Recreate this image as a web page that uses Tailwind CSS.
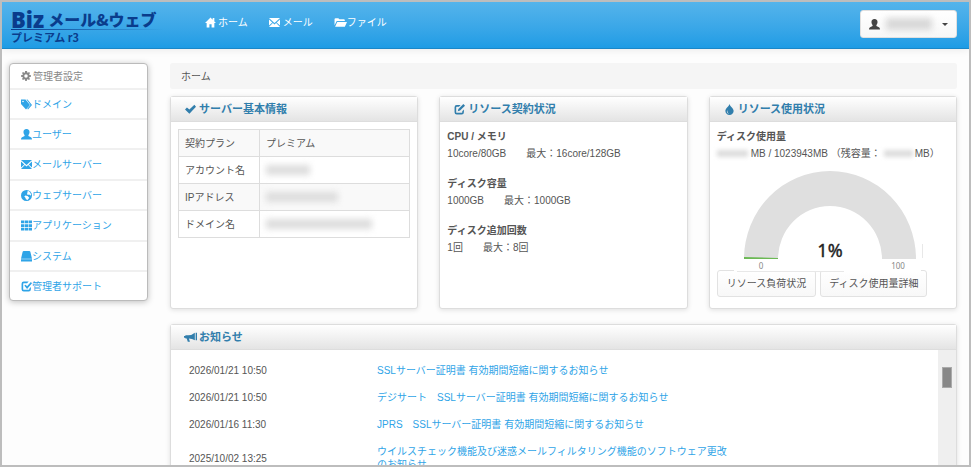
<!DOCTYPE html>
<html lang="ja">
<head>
    <meta charset="UTF-8">
    <meta name="viewport" content="width=device-width, initial-scale=1.0">
    <title>Bizメール&amp;ウェブ プレミアム r3</title>
    <script src="https://cdn.jsdelivr.net/npm/@tailwindcss/browser@4"></script>
</head>
<body class="h-screen overflow-hidden border-2 border-[#bdbdbd] bg-[#fdfdfd] font-['Liberation_Sans','Noto_Sans_CJK_JP',sans-serif] text-[10px] leading-[17px] text-[#555]">

    <!-- icons -->
    <svg class="hidden">
        <symbol id="home" viewBox="0 0 20 20"><path d="M10 1 0 11h3v8h5v-6h4v6h5v-8h3l-3-3V2h-3v3z"/></symbol>
        <symbol id="mail" viewBox="0 0 20 20"><path d="M0 2h20L10 11zM0 4.500 6 10 0 15.500zM20 4.500v11L14 10zM7 11l3 2.500 3-2.500 7 7H0z"/></symbol>
        <symbol id="folder" viewBox="0 0 24 20"><path d="M1 4q0-2 2-2h5l2 2h8q2 0 2 2v1H5L1 15zM6 9h18l-4 9H2z"/></symbol>
        <symbol id="user" viewBox="0 0 20 20"><path d="M10 0c4 0 5.500 2.500 5.500 5.500 0 2.500-1 4-2 5.500v1.500l4.500 2.500q2 1 2 4H0q0-3 2-4l4.500-2.500V11C5.500 9.500 4.500 8 4.500 5.500 4.500 2.500 6 0 10 0z"/></symbol>
        <symbol id="cog" viewBox="0 0 20 20"><path fill-rule="evenodd" d="M8 0h4l.5 3 1.500.6L16 2l2 2-1.700 2.500.7 1.500 3 .5v3l-3 .5-.7 1.500L18 16l-2 2-2.500-1.600-1.500.6-.5 3h-3L8 17l-1.500-.6L4 18l-2-2 1.700-2.500L3 12l-3-.5v-3L3 8l.7-1.500L2 4l2-2 2.500 1.600L8 3zM10 6.500a3.500 3.500 0 100 7 3.500 3.500 0 000-7z"/></symbol>
        <symbol id="tags" viewBox="0 0 22 20"><path fill-rule="evenodd" d="M0 0h9l9 11-8 9L0 9zM4 2.500a1.600 1.600 0 100 3.200 1.600 1.600 0 000-3.200z"/><path d="M11 0h2l9 11-8 9-1.500-1.500L19 11z"/></symbol>
        <symbol id="globe" viewBox="0 0 20 20"><path fill-rule="evenodd" d="M10 0a10 10 0 100 20 10 10 0 000-20zM11 3l3-1 3 3 1.500 4-1.500 1-2-2-3 1-1-3 1-1zM8 10l4 1 3 3-3 4-3-1-1-3-2-2z"/></symbol>
        <symbol id="grid" viewBox="0 0 20 20"><path d="M0 1h6v5H0zM7 1h6v5H7zM14 1h6v5h-6zM0 7.500h6v5H0zM7 7.500h6v5H7zM14 7.500h6v5h-6zM0 14h6v5H0zM7 14h6v5H7zM14 14h6v5h-6z"/></symbol>
        <symbol id="disk" viewBox="0 0 20 20"><path d="M5 0h10q1.500 0 2 1.500L20 14H0L3 1.500Q3.500 0 5 0zM0 15h20v4H0z"/></symbol>
        <symbol id="check" viewBox="0 0 20 20"><path d="M14 1H5Q1 1 1 5v10q0 4 4 4h9q4 0 4-4v-4l-3 3v1q0 1-1 1H5q-1 0-1-1V5q0-1 1-1h6z"/><path d="M6 8 8.500 7 11 9.500 18 2l2 2-9 10.500z"/></symbol>
        <symbol id="edit" viewBox="0 0 20 20"><path d="M12 2H5Q1 2 1 6v9q0 4 4 4h9q4 0 4-4v-5l-3 3v2q0 1-1 1H5q-1 0-1-1V6q0-1 1-1h4z"/><path d="m17 0 3 3-9 9-4 1 1-4z"/></symbol>
        <symbol id="ok" viewBox="0 0 20 20"><path d="m0 10 3.500-3.500L8 10l9-8.500L20 5 8 17.500z"/></symbol>
        <symbol id="drop" viewBox="0 0 20 20"><path fill-rule="evenodd" d="M10 0c1.500 5 7.500 8 7.500 12.500a7.500 7.500 0 01-15 0C2.500 8 8.500 5 10 0zM6 11c-2 4 0 6 3 7-2-2-3-4-3-7z"/></symbol>
        <symbol id="horn" viewBox="0 0 24 20"><path d="M20 1v14q-5-3-11-3l2 6H7l-2-6H3l-1-1.500H0V7h2l1-1h5q6 0 12-5zM21.500 1H24v14h-2.500z"/></symbol>
    </svg>

    <header class="flex h-[47px] items-start border-b border-[#1b87c8] bg-linear-to-b from-[#54b4eb] to-[#1d9ce5] pr-3 pl-[9px] text-white shadow-[0_1px_8px_rgba(0,0,0,0.08)]">
        <a href="#" class="mt-[8px] w-[153px] font-bold whitespace-nowrap text-[#0a3c8c]">
            <span class="flex h-[19px] items-center gap-[4px] leading-[19px]">
                <span class="font-['Open_Sans'] text-[22px] font-extrabold">Biz</span>
                <span class="font-['Noto_Sans_CJK_JP'] text-[16px] font-black">メール&amp;ウェブ</span>
            </span>
            <span class="block h-px bg-linear-to-r from-[#0a3c8c] to-transparent"></span>
            <span class="block font-['Noto_Sans_CJK_JP'] text-[11px] leading-[14px]">プレミアム r3</span>
        </a>
        <nav class="ml-[41px] flex h-[40px] flex-1 items-center gap-[21px]">
            <a href="#" class="flex items-center gap-[2px]"><svg class="size-[11px] fill-current"><use href="#home"/></svg>ホーム</a>
            <a href="#" class="flex items-center gap-[3px]"><svg class="size-[11px] fill-current"><use href="#mail"/></svg>メール</a>
            <a href="#" class="flex items-center"><svg class="h-[11px] w-[13px] fill-current"><use href="#folder"/></svg>ファイル</a>
        </nav>
        <button type="button" aria-label="アカウント" class="mt-2 flex h-[28px] w-[97px] items-center rounded-[3px] border border-[#e0e0e0] bg-linear-to-b from-white to-[#f7f7f7] px-2 text-[#444]">
            <svg class="size-[11px] fill-current"><use href="#user"/></svg>
            <span class="ml-[6px] h-3 w-[46px] bg-[#d8d8d8] blur-[3px]"></span>
            <span class="ml-auto border-x-[3px] border-t-[3px] border-x-transparent border-t-[#444]"></span>
        </button>
    </header>

    <div class="flex items-start gap-[22px] pt-[14px] pr-3 pl-[7px]">
        <aside class="w-[139px] shrink-0 rounded-[4px] border border-[#bbb] bg-white shadow-[0_1px_6px_rgba(0,0,0,0.25)]">
            <h2 class="flex h-6 items-center gap-[2px] px-[11px] text-[#888]"><svg class="size-[10px] fill-current"><use href="#cog"/></svg>管理者設定</h2>
            <ul class="text-[#2fa4e7]">
                <li class="border-t-2 border-[#f0f0f0]"><a href="#" class="flex h-[28px] items-center px-[11px]"><svg class="size-[11px] fill-current"><use href="#tags"/></svg>ドメイン</a></li>
                <li class="border-t-2 border-[#f0f0f0]"><a href="#" class="flex h-[28px] items-center px-[11px]"><svg class="size-[11px] fill-current"><use href="#user"/></svg>ユーザー</a></li>
                <li class="border-t-2 border-[#f0f0f0]"><a href="#" class="flex h-[29px] items-center px-[11px]"><svg class="size-[11px] fill-current"><use href="#mail"/></svg>メールサーバー</a></li>
                <li class="border-t-2 border-[#f0f0f0]"><a href="#" class="flex h-[28px] items-center px-[11px]"><svg class="size-[11px] fill-current"><use href="#globe"/></svg>ウェブサーバー</a></li>
                <li class="border-t-2 border-[#f0f0f0]"><a href="#" class="flex h-[29px] items-center px-[11px]"><svg class="size-[11px] fill-current"><use href="#grid"/></svg>アプリケーション</a></li>
                <li class="border-t-2 border-[#f0f0f0]"><a href="#" class="flex h-[28px] items-center px-[11px]"><svg class="size-[11px] fill-current"><use href="#disk"/></svg>システム</a></li>
                <li class="border-t-2 border-[#f0f0f0]"><a href="#" class="flex h-[28px] items-center px-[11px]"><svg class="size-[11px] fill-current"><use href="#check"/></svg>管理者サポート</a></li>
            </ul>
        </aside>

        <main class="min-w-0 flex-1">
            <div class="flex h-[26px] items-center rounded-[3px] bg-[#f5f5f5] px-[11px]">ホーム</div>

            <div class="mt-[7px] grid grid-cols-3 gap-[21px]">
                <section class="min-h-[213px] rounded-[3px] border border-[#ddd] bg-white shadow-[0_1px_5px_rgba(0,0,0,0.12)]">
                    <h3 class="flex h-[25px] items-center gap-[3px] border-b border-[#ddd] bg-linear-to-b from-white to-[#e4e4e4] px-[14px] text-[11px] font-bold text-[#317eac]"><svg class="size-[11px] fill-current"><use href="#ok"/></svg>サーバー基本情報</h3>
                    <div class="px-[7px] pt-[7px]">
                        <table class="w-full border-collapse [&_td]:border [&_td]:border-[#ddd] [&_td]:px-[6px] [&_th]:w-[81px] [&_th]:border [&_th]:border-[#ddd] [&_th]:px-[6px] [&_th]:text-left [&_th]:font-normal">
                            <tr class="h-[27px] bg-[#f9f9f9]"><th>契約プラン</th><td>プレミアム</td></tr>
                            <tr class="h-[27px]"><th>アカウント名</th><td><div class="h-[10px] w-[44px] bg-[#ddd] blur-[3px]"></div></td></tr>
                            <tr class="h-[27px] bg-[#f9f9f9]"><th>IPアドレス</th><td><div class="h-[10px] w-[72px] bg-[#ddd] blur-[3px]"></div></td></tr>
                            <tr class="h-[27px]"><th>ドメイン名</th><td><div class="h-[10px] w-[106px] bg-[#ddd] blur-[3px]"></div></td></tr>
                        </table>
                    </div>
                </section>

                <section class="min-h-[213px] rounded-[3px] border border-[#ddd] bg-white shadow-[0_1px_5px_rgba(0,0,0,0.12)]">
                    <h3 class="flex h-[25px] items-center gap-[3px] border-b border-[#ddd] bg-linear-to-b from-white to-[#e4e4e4] px-[14px] text-[11px] font-bold text-[#317eac]"><svg class="size-[11px] fill-current"><use href="#edit"/></svg>リソース契約状況</h3>
                    <dl class="px-[7px] pt-[6px] [&_dd]:mb-[13px] [&_dd]:whitespace-pre [&_dt]:font-bold">
                        <dt>CPU / メモリ</dt>
                        <dd>10core/80GB　　最大：16core/128GB</dd>
                        <dt>ディスク容量</dt>
                        <dd>1000GB　　最大：1000GB</dd>
                        <dt>ディスク追加回数</dt>
                        <dd>1回　　最大：8回</dd>
                    </dl>
                </section>

                <section class="min-h-[213px] rounded-[3px] border border-[#ddd] bg-white shadow-[0_1px_5px_rgba(0,0,0,0.12)]">
                    <h3 class="flex h-[25px] items-center gap-[3px] border-b border-[#ddd] bg-linear-to-b from-white to-[#e4e4e4] px-[14px] text-[11px] font-bold text-[#317eac]"><svg class="size-[11px] fill-current"><use href="#drop"/></svg>リソース使用状況</h3>
                    <div class="px-[7px] pt-[6px]">
                        <p class="font-bold">ディスク使用量</p>
                        <p class="flex items-center whitespace-pre"><span class="mr-[3px] h-[7px] w-[31px] bg-[#ddd] blur-[2px]"></span>MB / 1023943MB （残容量：<span class="mr-[2px] ml-[3px] h-[7px] w-[29px] bg-[#ddd] blur-[2px]"></span>MB）</p>
                        <svg class="relative mt-[8px] ml-[17px] h-[104px] w-[190px]" viewBox="0 0 190 104">
                            <path d="M10 89A86 88 0 01182 89H148A52 53 0 0044 89z" fill="#dfdfdf"/>
                            <path d="M10 87 44 88V89H10z" fill="#6cb955"/>
                            <path d="M0 99h187v3H0z" fill="#fff"/>
                            <path d="M3 101.500h107M188.500 74v14" fill="none" stroke="#e8e8e8"/>
                            <text x="96" y="87" text-anchor="middle" font-size="18" fill="#222" stroke="#222" stroke-width=".4" font-family="Noto Sans">1%</text>
                            <text x="27" y="99" text-anchor="middle" font-size="8" fill="#888" font-family="Noto Sans">0</text>
                            <text x="164" y="99" text-anchor="middle" font-size="8" fill="#888" font-family="Noto Sans">100</text>
                        </svg>
                        <div class="-mt-[4px] flex gap-1">
                            <button type="button" class="h-[27px] rounded-[3px] border border-[#e2e2e2] bg-linear-to-b from-white to-[#f8f8f8] px-[9px] whitespace-nowrap">リソース負荷状況</button>
                            <button type="button" class="h-[27px] rounded-[3px] border border-[#e2e2e2] bg-linear-to-b from-white to-[#f8f8f8] px-[8px] whitespace-nowrap">ディスク使用量詳細</button>
                        </div>
                    </div>
                </section>
            </div>

            <section class="mt-[15px] rounded-[3px] border border-[#ddd] bg-white shadow-[0_1px_5px_rgba(0,0,0,0.12)]">
                <h3 class="flex h-[25px] items-center gap-[2px] border-b border-[#ddd] bg-linear-to-b from-white to-[#e4e4e4] px-[13px] text-[11px] font-bold text-[#317eac]"><svg class="h-[11px] w-[13px] fill-current"><use href="#horn"/></svg>お知らせ</h3>
                <div class="flex">
                    <div class="flex-1 pt-[7px] pb-3 pl-[18px]">
                        <table class="leading-[13px] [&_td]:py-[7px] [&_td:first-child]:w-[188px]">
                            <tr><td>2026/01/21 10:50</td><td><a href="#" class="text-[#2fa4e7]">SSLサーバー証明書 有効期間短縮に関するお知らせ</a></td></tr>
                            <tr><td>2026/01/21 10:50</td><td><a href="#" class="text-[#2fa4e7]">デジサート　SSLサーバー証明書 有効期間短縮に関するお知らせ</a></td></tr>
                            <tr><td>2026/01/16 11:30</td><td><a href="#" class="text-[#2fa4e7]">JPRS　SSLサーバー証明書 有効期間短縮に関するお知らせ</a></td></tr>
                            <tr><td>2025/10/02 13:25</td><td><a href="#" class="text-[#2fa4e7]">ウイルスチェック機能及び迷惑メールフィルタリング機能のソフトウェア更改<br>のお知らせ</a></td></tr>
                        </table>
                    </div>
                    <div class="w-[18px] bg-[#efefef] pt-[17px]"><div class="mx-auto h-[21px] w-[10px] border border-[#aaa] bg-[#888]"></div></div>
                </div>
            </section>
        </main>
    </div>
</body>
</html>
